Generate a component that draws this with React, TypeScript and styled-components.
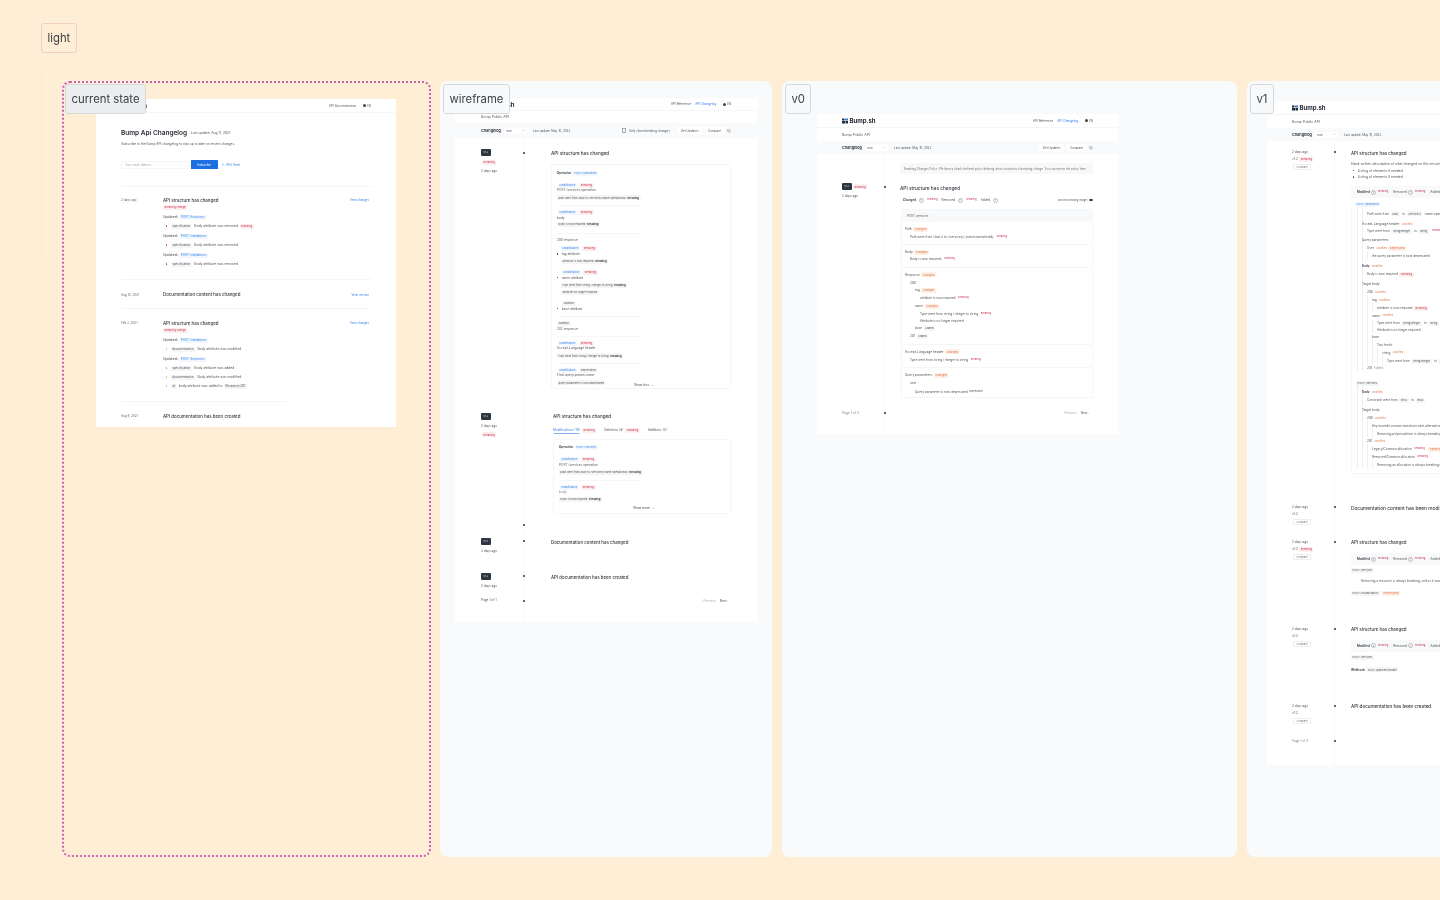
import React from 'react';
import styled, { createGlobalStyle } from 'styled-components';
import { ChevronDown, ChevronUp, ChevronLeft, ChevronRight, History, Rss } from 'lucide-react';

type Item = [number, number, React.ReactNode, number?];
type LinesProps = { from: number; left: number; items: Item[] };

const RED = '#c8374f';
const BLUE = '#2f7fe6';
const ORANGE = '#dd7a4a';

const GlobalStyle = createGlobalStyle`
  html, body {
    margin: 0;
    padding: 0;
    background: #ffeed6;
    overflow: hidden;
  }
  body {
    font-family: Inter, "Liberation Sans", sans-serif;
    color: #333;
  }
`;

const Canvas = styled.div`
  position: relative;
  width: 1440px;
  height: 900px;
  overflow: hidden;
  background: #ffeed6;
`;

const SectionEdge = styled.div`
  position: absolute;
  left: 41px;
  top: 60px;
  width: 1500px;
  height: 1000px;
  border: 1px dotted rgba(190, 170, 150, 0.1);
  border-radius: 8px;
`;

const SectionLabel = styled.div<{ $x: number; $y: number }>`
  position: absolute;
  left: ${p => p.$x}px;
  top: ${p => p.$y}px;
  height: 30px;
  padding: 0 5.5px;
  display: flex;
  align-items: center;
  box-sizing: border-box;
  border: 1px solid #f1cec6;
  border-radius: 3px;
  background: #ffeed6;
  font-size: 11.3px;
  color: #3a3f45;
  filter: blur(0.2px);
`;

const Frame = styled.div<{ $x: number; $y: number; $w: number; $current?: boolean }>`
  position: absolute;
  left: ${p => p.$x}px;
  top: ${p => p.$y}px;
  width: ${p => p.$w}px;
  height: 776px;
  box-sizing: border-box;
  overflow: hidden;
  border-radius: 8px;
  background: ${p => (p.$current ? 'transparent' : '#f8fafc')};
  border: ${p => (p.$current ? '2px dotted #cf63b3' : 'none')};
`;

const FrameLabel = styled.div<{ $l: number; $t: number; $tint?: string }>`
  position: absolute;
  z-index: 2;
  left: ${p => p.$l}px;
  top: ${p => p.$t}px;
  height: 30px;
  padding: 0 5.5px;
  display: flex;
  align-items: center;
  box-sizing: border-box;
  border: 1px solid #d6d8db;
  border-radius: 3px;
  background: ${p => (p.$tint === 'current' ? '#ebedef' : '#f8f9fb')};
  font-size: 11.3px;
  color: #3a3f45;
  filter: blur(0.2px);
`;

const Page = styled.div<{ $mx: number; $my: number; $w: number; $h: number }>`
  margin: ${p => p.$my}px 0 0 ${p => p.$mx}px;
  width: ${p => p.$w}px;
  height: ${p => p.$h}px;
  background: #fff;
  overflow: hidden;
  filter: blur(0.3px);
`;

const Line = styled.div<{ $gap: number; $x: number; $guide: number }>`
  box-sizing: content-box;
  height: 6px;
  padding-top: ${p => Math.max(0, p.$gap)}px;
  margin-top: ${p => Math.min(0, p.$gap)}px;
  padding-left: ${p => p.$x}px;
  display: flex;
  align-items: center;
  gap: 1.5px;
  white-space: nowrap;
  ${p =>
    p.$guide > 0 &&
    `background-image: repeating-linear-gradient(90deg, #eceef1 0 0.6px, transparent 0.6px 5px);
     background-repeat: no-repeat;
     background-position: 5px 0;
     background-size: ${p.$guide}px 100%;`}
`;

const TopBar = styled.div<{ $h: number; $pad: number }>`
  height: ${p => p.$h}px;
  padding: 0 ${p => p.$pad}px;
  box-sizing: border-box;
  display: flex;
  align-items: center;
  gap: 1.5px;
  border-bottom: 0.5px solid #f5f6f7;
`;

const SubBar = styled.div<{ $h: number; $pad: number }>`
  height: ${p => p.$h}px;
  padding: 0 ${p => p.$pad}px;
  box-sizing: border-box;
  display: flex;
  align-items: center;
`;

const ChangeBar = styled(SubBar)`
  background: #f8fafc;
  gap: 3px;
`;

const Brand = styled.span`
  font-size: 6px;
  font-weight: 700;
  color: #252b35;
`;

const Nav = styled.nav`
  margin-left: auto;
  display: flex;
  align-items: center;
  gap: 4px;
`;

const Lang = styled.span`
  display: flex;
  align-items: center;
  gap: 1px;
  margin-left: 3px;
  font-size: 2.8px;
  color: #555;
`;

const Globe = styled.i`
  width: 3px;
  height: 3px;
  border-radius: 50%;
  background: #444;
`;

const Small = styled.span<{ $s?: number; $c?: string; $ml?: number }>`
  display: inline-flex;
  align-items: center;
  font-size: ${p => p.$s ?? 3.1}px;
  color: ${p => p.$c ?? '#555'};
  margin-left: ${p => p.$ml ?? 0}px;
`;

const Strong = styled.span<{ $s?: number }>`
  font-size: ${p => p.$s ?? 3.8}px;
  font-weight: 600;
  color: #2b2f36;
`;

const Select = styled.span`
  width: 23px;
  height: 6px;
  margin-right: 3px;
  padding: 0 2px;
  box-sizing: border-box;
  display: flex;
  align-items: center;
  justify-content: space-between;
  background: #fff;
  border-radius: 1px;
  font-size: 2.6px;
  color: #666;
`;

const Tools = styled.div`
  margin-left: auto;
  display: flex;
  align-items: center;
  gap: 2.5px;
`;

const Check = styled.i`
  width: 2.2px;
  height: 2.2px;
  border: 0.3px solid #aaa;
`;

const ToolButton = styled.span<{ $ml?: number }>`
  height: 7px;
  padding: 0 3.5px;
  margin-left: ${p => p.$ml ?? 0}px;
  display: flex;
  align-items: center;
  background: #fff;
  border-radius: 1px;
  font-size: 3px;
  color: #555;
`;

const OutlineButton = styled.span`
  height: 6px;
  padding: 0 2.5px;
  display: flex;
  align-items: center;
  border: 0.5px solid #eceef1;
  border-radius: 1px;
  box-sizing: border-box;
  font-size: 2.6px;
  color: #777;
`;

const Timeline = styled.div`
  display: flex;
  height: 100%;
`;

const Side = styled.div<{ $w: number }>`
  width: ${p => p.$w}px;
  flex: none;
`;

const Main = styled.div`
  position: relative;
  flex: 1;
  min-width: 0;
  border-left: 1px solid #f7f8fa;
`;

const Dot = styled.i<{ $t: number }>`
  position: absolute;
  left: -1.5px;
  top: ${p => p.$t}px;
  width: 2px;
  height: 2px;
  border-radius: 50%;
  background: #333;
`;

const VersionChip = styled.span`
  width: 9.5px;
  height: 7px;
  display: flex;
  align-items: center;
  justify-content: center;
  background: #2f3640;
  border-radius: 1px;
  font-size: 2.4px;
  color: #dfe3e8;
`;

const toneBg: Record<string, string> = { blue: '#f2f7fe', red: '#fdeeee', orange: '#fdeee6' };
const toneFg: Record<string, string> = { blue: BLUE, red: RED, orange: ORANGE };

const Tag = styled.span<{ $tone?: string; $s?: number }>`
  height: 5px;
  padding: 0 1.5px;
  margin-right: 1px;
  display: inline-flex;
  align-items: center;
  gap: 1px;
  border-radius: 1.2px;
  background: ${p => (p.$tone ? toneBg[p.$tone] : '#f4f5f7')};
  color: ${p => (p.$tone ? toneFg[p.$tone] : '#555')};
  font-size: ${p => p.$s ?? 2.7}px;

  b {
    font-weight: 600;
    color: #333;
  }
`;

const RedText = styled.span`
  margin: 0 2px 1px 1px;
  font-size: 2.5px;
  color: ${RED};
`;

const OrangeText = styled.span`
  margin-left: 1px;
  font-size: 2.5px;
  color: ${ORANGE};
`;

const Count = styled.span`
  width: 3px;
  height: 3px;
  margin: 0 1px;
  display: flex;
  align-items: center;
  justify-content: center;
  border: 0.3px solid #bbb;
  border-radius: 50%;
  font-size: 2px;
  color: #666;
`;

const Bullet = styled.i<{ $c: string }>`
  width: 1.2px;
  height: 1.2px;
  margin-right: 2px;
  border-radius: 50%;
  background: ${p => p.$c};
`;

const PageTitle = styled.span`
  margin-right: 2.5px;
  font-size: 6.5px;
  font-weight: 600;
  color: #2b2f36;
`;

const Title = styled.span<{ $s?: number }>`
  font-size: ${p => p.$s ?? 4.4}px;
  font-weight: 500;
  color: #353a42;
`;

const DateCell = styled.span`
  width: 42px;
  flex: none;
  margin-right: -1.5px;
  font-size: 3px;
  color: #666;
`;

const More = styled.span<{ $r?: number }>`
  margin-left: auto;
  margin-right: ${p => p.$r ?? 27}px;
  display: flex;
  align-items: center;
  gap: 1.5px;
  font-size: 2.9px;
  color: ${BLUE};
`;

const Toggle = styled.i`
  width: 4px;
  height: 2.5px;
  border-radius: 2px;
  background: #444;
`;

const Rule = styled.hr<{ $w: number }>`
  width: ${p => p.$w}px;
  height: 0.6px;
  margin: 0;
  border: 0;
  background: #f5f6f7;
`;

const EmailInput = styled.span`
  width: 68px;
  height: 8px;
  padding-left: 3px;
  box-sizing: border-box;
  display: flex;
  align-items: center;
  background: #fff;
  border: 0.4px solid #f5f6f7;
  font-size: 2.9px;
  color: #aaa;
`;

const SubmitButton = styled.span`
  width: 27px;
  height: 8.5px;
  display: flex;
  align-items: center;
  justify-content: center;
  background: #1b6fe0;
  border-radius: 0.5px;
  font-size: 2.9px;
  color: #fff;
`;

const RssLink = styled.span`
  margin-left: 3px;
  display: flex;
  align-items: center;
  gap: 2px;
  font-size: 2.9px;
  color: ${BLUE};
`;

const Card = styled.div<{ $x: number; $mt: number; $w: number; $h: number }>`
  margin: ${p => p.$mt}px 0 0 ${p => p.$x}px;
  width: ${p => p.$w}px;
  height: ${p => p.$h}px;
  box-sizing: border-box;
  border: 0.5px solid #f5f6f8;
  border-radius: 1.5px;
  overflow: hidden;
`;

const CardHead = styled.div`
  height: 12px;
  padding-left: 5px;
  display: flex;
  align-items: center;
  background: #f8f9fa;
  font-size: 2.9px;
  color: #555;
`;

const ShowToggle = styled.span<{ $l?: number }>`
  margin-left: ${p => p.$l ?? 0}px;
  display: flex;
  align-items: center;
  gap: 1.5px;
  font-size: 3.2px;
  color: #444;
`;

const Tabs = styled.div`
  display: flex;
  align-items: center;
  gap: 2px;
`;

const ActiveTab = styled.span`
  height: 6px;
  display: flex;
  align-items: center;
  font-size: 3.2px;
  color: ${BLUE};
  box-shadow: 0 1.2px 0 -0.6px ${BLUE};
`;

const Notice = styled.div<{ $mt: number }>`
  margin: ${p => p.$mt}px 0 0 15px;
  width: 193px;
  height: 11px;
  padding-left: 4px;
  box-sizing: border-box;
  display: flex;
  align-items: center;
  white-space: nowrap;
  overflow: hidden;
  background: #f7f8fa;
  font-size: 2.85px;
  color: #777;
`;

const PagerRow = styled.div`
  display: flex;
  align-items: center;
  gap: 4px;
`;

const TabCard = styled.div`
  height: 12px;
  width: 200px;
  padding-left: 6px;
  display: flex;
  align-items: center;
  background: #f8f9fa;
  border-radius: 1.5px;
`;

const V1Tree = styled.div`
  margin-left: 16px;
  width: 300px;
  height: 267px;
  border: 0.5px solid #f5f6f8;
  border-top: 0;
  box-sizing: border-box;
`;

function Lines({ from, left, items }: LinesProps) {
  let prev = from;
  return (
    <>
      {items.map(([y, x, node, guide], i) => {
        const gap = y - 3 - prev;
        prev = y + 3;
        return (
          <Line key={i} $gap={gap} $x={x - left} $guide={guide ?? 0}>
            {node}
          </Line>
        );
      })}
    </>
  );
}

function Logo() {
  return (
    <svg width="6" height="6" viewBox="0 0 12 12">
      <rect x="0" y="1" width="5" height="4" fill="#252b35" />
      <rect x="6" y="1" width="6" height="4" fill="#3c7bd9" />
      <rect x="0" y="6" width="7" height="5" fill="#252b35" />
      <rect x="8" y="6" width="4" height="5" fill="#252b35" />
    </svg>
  );
}

function AppHeader({ pad, top, sub, bar, tools }: { pad: number; top: number; sub: number; bar: number; tools: React.ReactNode }) {
  return (
    <>
      <TopBar $h={top} $pad={pad}>
        <Logo />
        <Brand>Bump.sh</Brand>
        <Nav>
          <Small $s={3}>API Reference</Small>
          <Small $s={3} $c={BLUE}>API Changelog</Small>
          <Lang>
            <Globe />
            EN
          </Lang>
        </Nav>
      </TopBar>
      <SubBar $h={sub} $pad={pad}>
        <Small $s={3.6}>Bump Public API</Small>
      </SubBar>
      <ChangeBar $h={bar} $pad={pad}>
        <Strong>Changelog</Strong>
        <Select>
          main
          <ChevronDown size={3} />
        </Select>
        <Small $s={3}>Last update: May 10, 2023</Small>
        <Tools>{tools}</Tools>
      </ChangeBar>
    </>
  );
}

const Ver = () => <VersionChip>v1.2</VersionChip>;

const change = (code: string, text: string, color: string, extra?: React.ReactNode) => (
  <>
    <Bullet $c={color} />
    <Tag $s={3}>{code}</Tag>
    <Small $s={3.3}>{text}</Small>
    {extra}
  </>
);

const updated = (path: string) => (
  <>
    <Small $s={3.4} $c="#444">Updated:</Small>
    <Tag $tone="blue" $s={3.1}>{path}</Tag>
  </>
);

function CurrentPage() {
  return (
    <Page $mx={32} $my={16} $w={300} $h={328}>
      <TopBar $h={14} $pad={25}>
        <Brand>Bump.sh</Brand>
        <Nav>
          <Small $s={3}>API Documentation</Small>
          <Lang>
            <Globe />
            EN
          </Lang>
        </Nav>
      </TopBar>
      <Lines
        from={113}
        left={96}
        items={[
          [133, 121, <><PageTitle>Bump Api Changelog</PageTitle><Small $s={3.3}>Last update: Aug 11, 2021</Small></>],
          [144, 121, <Small $s={3.2}>Subscribe to the Bump API changelog to stay up to date on recent changes.</Small>],
          [164.5, 121, <><EmailInput>Your email address...</EmailInput><SubmitButton>Subscribe</SubmitButton><RssLink><Rss size={2.5} />RSS Feed</RssLink></>],
          [186, 121, <Rule $w={251} />],
          [200, 121, <><DateCell>2 days ago</DateCell><Title>API structure has changed</Title><More>View changes</More></>],
          [207, 163, <Tag $tone="red">Breaking change</Tag>],
          [217, 163, updated('POST /functions')],
          [226, 166, change('specification', 'Body attribute was removed', RED, <Tag $tone="red">Breaking</Tag>)],
          [236, 163, updated('POST /validations')],
          [245, 166, change('specification', 'Body attribute was removed', RED)],
          [255, 163, updated('POST /validations')],
          [264, 166, change('specification', 'Body attribute was removed', RED)],
          [279, 121, <Rule $w={251} />],
          [294.5, 121, <><DateCell>Aug 10, 2021</DateCell><Title>Documentation content has changed</Title><More>View version</More></>],
          [308, 121, <Rule $w={251} />],
          [323, 121, <><DateCell>Feb 3, 2021</DateCell><Title>API structure has changed</Title><More>View changes</More></>],
          [330, 163, <Tag $tone="red">Breaking change</Tag>],
          [340, 163, updated('POST /validations')],
          [349, 166, change('documentation', 'Body attribute was modified', '#e9b949')],
          [359, 163, updated('POST /functions')],
          [368, 166, change('specification', 'Body attribute was added', '#9aa3ad')],
          [377, 166, change('documentation', 'Body attribute was modified', '#e9b949')],
          [386, 166, change('id', 'body attribute was added to', '#e9b949', <Tag $s={3}>Response 201</Tag>)],
          [401, 121, <Rule $w={166} />],
          [416, 121, <><DateCell>Aug 9, 2021</DateCell><Title>API documentation has been created</Title></>],
        ]}
      />
    </Page>
  );
}

const modBreak = (
  <>
    <Tag $tone="blue">Modification</Tag>
    <Tag $tone="red">Breaking</Tag>
  </>
);

function ChangeCode({ children, breaking }: { children: React.ReactNode; breaking?: boolean }) {
  return (
    <Tag>
      {children} {breaking && <b>Breaking</b>}
    </Tag>
  );
}

function Pager() {
  return (
    <PagerRow>
      <Small $s={3} $c="#aaa"><ChevronLeft size={2.5} /> Previous</Small>
      <Small $s={3}>Next <ChevronRight size={2.5} /></Small>
    </PagerRow>
  );
}

function WireframePage() {
  const tools = (
    <>
      <Check />
      <Small $s={3}>Only show breaking changes</Small>
      <ToolButton $ml={5}>Get Updates</ToolButton>
      <ToolButton>Compare</ToolButton>
      <History size={4} strokeWidth={1.5} color="#555" />
    </>
  );
  return (
    <Page $mx={15} $my={17} $w={302} $h={524}>
      <AppHeader pad={26} top={13} sub={12} bar={15} tools={tools} />
      <Timeline>
        <Side $w={68}>
          <Lines
            from={138}
            left={455}
            items={[
              [152.5, 481, <Ver />],
              [162, 482, <Tag $tone="red">Breaking</Tag>],
              [171, 481, <Small>2 days ago</Small>],
              [416.5, 481, <Ver />],
              [426, 481, <Small>2 days ago</Small>],
              [434.5, 482, <Tag $tone="red">Breaking</Tag>],
              [541.5, 481, <Ver />],
              [551, 481, <Small>3 days ago</Small>],
              [576.5, 481, <Ver />],
              [586, 481, <Small>2 days ago</Small>],
              [600, 481, <Small>Page 1 of 1</Small>],
            ]}
          />
        </Side>
        <Main>
          <Dot $t={14} />
          <Dot $t={386} />
          <Dot $t={402} />
          <Dot $t={437} />
          <Dot $t={462} />
          <Lines from={138} left={524} items={[[153, 551, <Title $s={4.6}>API structure has changed</Title>]]} />
          <Card $x={27} $mt={8} $w={180} $h={225}>
            <Lines
              from={164}
              left={551}
              items={[
                [172, 556, <><Strong $s={3}>Operation</Strong><Tag $tone="blue">POST /operations</Tag></>],
                [184, 557, modBreak],
                [189, 556, <Small $s={3.2}>POST /services operation</Small>],
                [196.5, 556, <ChangeCode breaking>path went from /bar/ to /services/{'{name.operationId}'}:</ChangeCode>],
                [204.5, 556, <Rule $w={83} />],
                [211, 557, modBreak],
                [216.5, 556, <Small $s={3.2}>body</Small>],
                [223, 556, <ChangeCode breaking>body is now required:</ChangeCode>],
                [232, 556, <Rule $w={83} />],
                [238.5, 556, <Small $s={3.2}>200 response</Small>],
                [247, 560, modBreak],
                [253, 556, <><Bullet $c="#333" /><Small $s={3.2}>tag attribute</Small></>],
                [260, 560, <ChangeCode breaking>attribute is now required:</ChangeCode>],
                [271, 561, modBreak],
                [276.5, 556, <><Bullet $c="#333" /><Small $s={3.2}>name attribute</Small></>],
                [284, 560, <ChangeCode breaking>type went from string / integer to string:</ChangeCode>],
                [291, 560, <ChangeCode>attribute no longer required</ChangeCode>],
                [302, 561, <Tag>Addition</Tag>],
                [307.5, 556, <><Bullet $c="#333" /><Small $s={3.2}>base attribute</Small></>],
                [315, 556, <Rule $w={83} />],
                [322, 556, <Tag>Addition</Tag>],
                [327.5, 556, <Small $s={3.2}>202 response</Small>],
                [335, 556, <Rule $w={83} />],
                [342, 557, modBreak],
                [347, 556, <Small $s={3.2}>Accept-Language header</Small>],
                [354.5, 556, <ChangeCode breaking>type went from string / integer to string:</ChangeCode>],
                [362, 556, <Rule $w={83} />],
                [369, 557, <><Tag $tone="blue">Modification</Tag><Tag>Deprecated</Tag></>],
                [374, 556, <Small $s={3.2}>Find-query-param-name</Small>],
                [381.5, 556, <ChangeCode>query parameter is now deprecated</ChangeCode>],
                [384, 633, <ShowToggle>Show less<ChevronUp size={3} /></ShowToggle>],
              ]}
            />
          </Card>
          <Lines
            from={389}
            left={524}
            items={[
              [416, 553, <Title $s={4.6}>API structure has changed</Title>],
              [430, 553, <Tabs><ActiveTab>Modifications (10)</ActiveTab><Tag $tone="red">Breaking</Tag><Small $s={3.2} $ml={5}>Deletions (8)</Small><Tag $tone="red">Breaking</Tag><Small $s={3.2} $ml={5}>Additions (2)</Small></Tabs>],
            ]}
          />
          <Card $x={29} $mt={6} $w={178} $h={75}>
            <Lines
              from={439}
              left={553}
              items={[
                [446, 558, <><Strong $s={3}>Operation</Strong><Tag $tone="blue">POST /services</Tag></>],
                [458, 559, modBreak],
                [463.5, 558, <Small $s={3.2}>POST /services operation</Small>],
                [471, 558, <ChangeCode breaking>path went from /bar/ to /services/{'{name.operationId}'}:</ChangeCode>],
                [479, 558, <Rule $w={83} />],
                [486, 559, modBreak],
                [491, 558, <Small $s={3.2} $c="#888">body</Small>],
                [498, 558, <ChangeCode breaking>body is now required:</ChangeCode>],
                [507, 632, <ShowToggle>Show more<ChevronDown size={3} /></ShowToggle>],
              ]}
            />
          </Card>
          <Lines
            from={514}
            left={524}
            items={[
              [542, 551, <Title>Documentation content has changed</Title>],
              [577, 551, <Title>API documentation has been created</Title>],
              [601, 701, <Pager />],
            ]}
          />
        </Main>
      </Timeline>
    </Page>
  );
}

const chgTag = <Tag $tone="orange">Changed</Tag>;
const brk = <RedText>Breaking</RedText>;

function V0Page() {
  const tools = (
    <>
      <ToolButton>Get Updates</ToolButton>
      <ToolButton>Compare</ToolButton>
      <History size={4} strokeWidth={1.5} color="#555" />
    </>
  );
  return (
    <Page $mx={35} $my={33} $w={301} $h={320}>
      <AppHeader pad={25} top={14} sub={13} bar={13} tools={tools} />
      <Timeline>
        <Side $w={67}>
          <Lines
            from={154}
            left={817}
            items={[
              [186.5, 842, <><Ver /><Tag $tone="red">Breaking</Tag></>],
              [195.5, 842, <Small>2 days ago</Small>],
              [412.5, 842, <Small $s={3.2} $c="#888">Page 1 of 4</Small>],
            ]}
          />
        </Side>
        <Main>
          <Dot $t={32} />
          <Dot $t={258} />
          <Notice $mt={9}>Breaking Changes Policy: We have a clearly defined policy defining what constitutes a breaking change. You can review the policy here.</Notice>
          <Lines
            from={174}
            left={885}
            items={[
              [188, 900, <Title $s={4.75}>API structure has changed</Title>],
              [200, 903, <><Strong $s={3}>Changed</Strong><Count>5</Count>{brk}<Small $ml={0.5}>Removed</Small><Count>3</Count>{brk}<Small $ml={0.5}>Added</Small><Count>2</Count><More $r={25}><Small $s={2.2}>Show only breaking changes</Small><Toggle /></More></>],
            ]}
          />
          <Card $x={16} $mt={6} $w={192} $h={189}>
            <CardHead>POST /services</CardHead>
            <Lines
              from={221}
              left={901}
              items={[
                [228, 904, <><Small $s={3.2}>Path</Small>{chgTag}</>],
                [235.5, 909, <><Small>Path went from /{'{bar}'}/ to /{'{services}'}/ (name.operationId):</Small>{brk}</>],
                [243.5, 901, <Rule $w={192} />],
                [251, 904, <><Small $s={3.2}>Body</Small>{chgTag}</>],
                [258, 909, <><Small>Body is now required:</Small>{brk}</>],
                [266, 901, <Rule $w={192} />],
                [273.5, 904, <><Small $s={3.2}>Response</Small>{chgTag}</>],
                [281.5, 909, <Small>200</Small>],
                [289, 914, <><Small>tag</Small>{chgTag}</>],
                [297, 919, <><Small>attribute is now required</Small>{brk}</>],
                [305, 914, <><Small>name</Small>{chgTag}</>],
                [313, 919, <><Small>Type went from string / integer to string</Small>{brk}</>],
                [320, 919, <Small>Attribute is no longer required</Small>],
                [327, 914, <><Small>base</Small><Tag>Added</Tag></>],
                [335, 909, <><Small>201</Small><Tag>Added</Tag></>],
                [343, 901, <Rule $w={192} />],
                [350.5, 904, <><Small $s={3.2}>Accept-Language header</Small>{chgTag}</>],
                [358.5, 909, <><Small>Type went from string / integer to string</Small>{brk}</>],
                [366.5, 901, <Rule $w={192} />],
                [374, 904, <><Small $s={3.2}>Query parameters</Small>{chgTag}</>],
                [382, 909, <Small>user</Small>],
                [390.5, 914, <><Small>Query parameter is now deprecated</Small><Small $s={2.4}>Deprecated</Small></>],
              ]}
            />
          </Card>
          <Lines from={398} left={885} items={[[413, 1062, <Pager />]]} />
        </Main>
      </Timeline>
    </Page>
  );
}

const modified = <OrangeText>Modified</OrangeText>;

const leftMeta = (y: number, breaking: boolean): Item[] => [
  [y, 1292, <Small>2 days ago</Small>],
  [y + 7, 1292, <><Small>v1.2</Small>{breaking && <Tag $tone="red">Breaking</Tag>}</>],
  [y + 15, 1293, <OutlineButton>Compare</OutlineButton>],
];

const tabRow = (
  <TabCard>
    <Strong $s={3}>Modified</Strong><Count>3</Count>{brk}
    <Small $ml={3}>Removed</Small><Count>1</Count>{brk}
    <Small $ml={3}>Added</Small><Count>1</Count>
  </TabCard>
);

const g = (n: number) => n * 5 + 1;

function V1Page() {
  return (
    <Page $mx={20} $my={20} $w={340} $h={664}>
      <AppHeader pad={25} top={14} sub={13} bar={13} tools={null} />
      <Timeline>
        <Side $w={67}>
          <Lines
            from={141}
            left={1267}
            items={[
              ...leftMeta(152, true),
              ...leftMeta(507, false),
              ...leftMeta(542, true),
              ...leftMeta(629, false),
              ...leftMeta(706, false),
              [741, 1292, <Small $c="#888">Page 1 of 4</Small>],
            ]}
          />
        </Side>
        <Main>
          <Dot $t={10} />
          <Dot $t={365} />
          <Dot $t={400} />
          <Dot $t={487} />
          <Dot $t={564} />
          <Dot $t={599} />
          <Lines
            from={141}
            left={1335}
            items={[
              [153, 1351, <Title>API structure has changed</Title>],
              [164, 1351, <Small $s={3.3}>Hand-written description of what changed on this version. Markdown is supported</Small>],
              [170.5, 1353, <><Bullet $c="#333" /><Small $s={3.3}>Listing of elements if needed</Small></>],
              [177, 1353, <><Bullet $c="#333" /><Small $s={3.3}>Listing of elements if needed</Small></>],
              [192, 1351, tabRow],
              [204, 1355, <Tag $tone="blue">POST /operations</Tag>],
            ]}
          />
          <V1Tree>
            <Lines
              from={207}
              left={1351}
              items={[
                [213.5, 1366, <><Small>Path went from</Small><Tag>/bar/</Tag><Small>to</Small><Tag>/services/</Tag><Small>name.operationId</Small></>, 6],
                [224, 1361, <><Small>Accept-Language header</Small>{modified}</>, 6],
                [231, 1366, <><Small>Type went from</Small><Tag>string/integer</Tag><Small>to</Small><Tag>string</Tag>{brk}</>, g(1)],
                [240, 1361, <Small>Query parameters</Small>, 6],
                [248, 1366, <><Small>User</Small>{modified}<Tag $tone="orange">Deprecated</Tag></>, g(1)],
                [256, 1371, <Small>the query parameter is now deprecated</Small>, g(2)],
                [266, 1361, <><Strong $s={3}>Body</Strong>{modified}</>, 6],
                [274, 1366, <><Small>Body is now required</Small><Tag $tone="red">Breaking</Tag></>, g(1)],
                [284, 1361, <Small>Target body</Small>, 6],
                [292, 1366, <><Small>200</Small>{modified}</>, g(1)],
                [300, 1371, <><Small>tag</Small>{modified}</>, g(2)],
                [308, 1376, <><Small>attribute is now required</Small><Tag $tone="red">Breaking</Tag></>, g(3)],
                [315.5, 1371, <><Small>name</Small>{modified}</>, g(2)],
                [323, 1376, <><Small>Type went from</Small><Tag>string/integer</Tag><Small>to</Small><Tag>string</Tag>{brk}</>, g(3)],
                [329.5, 1376, <Small>Attribute is no longer required</Small>, g(3)],
                [337, 1371, <Small>base</Small>, g(2)],
                [345, 1376, <Small>Two levels</Small>, g(3)],
                [352.5, 1381, <><Small>string</Small>{modified}</>, g(4)],
                [361, 1386, <><Small>Type went from</Small><Tag>string/integer</Tag><Small>to</Small><Tag>string</Tag></>, g(5)],
                [368, 1366, <><Small>201</Small><Small $c="#999">Added</Small></>, g(1)],
                [383, 1355, <Tag>POST /services</Tag>],
                [392, 1361, <><Strong $s={3}>Body</Strong>{modified}</>, 6],
                [400, 1366, <><Small>Constraint went from</Small><Tag>int32</Tag><Small>to</Small><Tag>int64</Tag></>, g(1)],
                [410, 1361, <Small>Target body</Small>, 6],
                [418, 1366, <><Small>200</Small>{modified}</>, g(1)],
                [426, 1371, <><Small>Key moved/common.transform.next.alternatives</Small>{brk}</>, g(2)],
                [434, 1376, <><Small>Removing polymorphism is always breaking</Small>{brk}</>, g(3)],
                [441, 1366, <><Small>201</Small>{modified}</>, g(1)],
                [449, 1371, <><Small>Legacy/Common.allocation</Small>{brk}<Tag $tone="orange">Deprecated</Tag></>, g(2)],
                [457, 1371, <><Small>Removed/Common.allocation</Small>{brk}</>, g(2)],
                [465, 1376, <Small>Removing an allocation is always breaking unless</Small>, g(3)],
              ]}
            />
          </V1Tree>
          <Lines
            from={474}
            left={1335}
            items={[
              [507.5, 1351, <Title $s={4.8}>Documentation content has been modified</Title>],
              [542, 1351, <Title>API structure has changed</Title>],
              [559, 1351, tabRow],
              [570, 1351, <Tag>POST /services</Tag>],
              [581, 1361, <Small>Removing a resource is always breaking, unless it was deprecated first</Small>],
              [593, 1351, <><Tag>POST /collaborators</Tag><Tag $tone="orange">Deprecated</Tag></>],
              [629, 1351, <Title>API structure has changed</Title>],
              [645.5, 1351, tabRow],
              [657, 1351, <Tag>POST /services</Tag>],
              [669.5, 1351, <><Strong $s={3}>Webhook</Strong><Tag>POST /payment/create</Tag></>],
              [706.5, 1351, <Title $s={4.55}>API documentation has been created</Title>],
            ]}
          />
        </Main>
      </Timeline>
    </Page>
  );
}

export default function App() {
  return (
    <>
      <GlobalStyle />
      <Canvas>
        <SectionLabel $x={41} $y={23}>light</SectionLabel>
        <SectionEdge />
        <Frame $x={62} $y={81} $w={369} $current>
          <FrameLabel $l={1} $t={1} $tint="current">current state</FrameLabel>
          <CurrentPage />
        </Frame>
        <Frame $x={440} $y={81} $w={332}>
          <FrameLabel $l={3} $t={3}>wireframe</FrameLabel>
          <WireframePage />
        </Frame>
        <Frame $x={782} $y={81} $w={455}>
          <FrameLabel $l={3} $t={3}>v0</FrameLabel>
          <V0Page />
        </Frame>
        <Frame $x={1247} $y={81} $w={240}>
          <FrameLabel $l={3} $t={3}>v1</FrameLabel>
          <V1Page />
        </Frame>
      </Canvas>
    </>
  );
}
